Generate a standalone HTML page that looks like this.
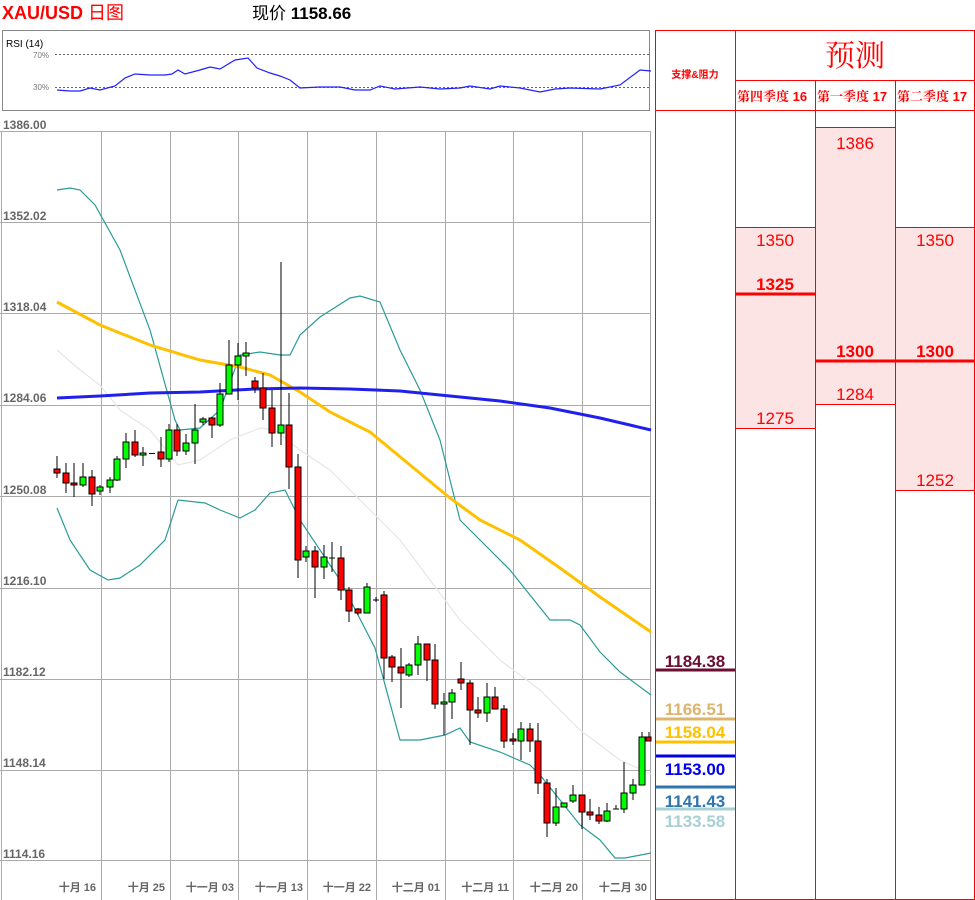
<!DOCTYPE html>
<html><head><meta charset="utf-8"><style>
*{margin:0;padding:0}
body{width:975px;height:900px;background:#fff;position:relative;overflow:hidden;font-family:"Liberation Sans","Noto Sans CJK SC",sans-serif}
.a{position:absolute}
</style></head><body>
<div class="a" style="left:2px;top:2px;font-size:18px;font-weight:bold;color:#f00;line-height:22px">XAU/USD <span style="font-weight:normal">日图</span></div>
<div class="a" style="left:252px;top:3px;font-size:17px;color:#000;line-height:22px">现价 <b>1158.66</b></div>

<svg class="a" style="left:0;top:0" width="655" height="900" xmlns="http://www.w3.org/2000/svg">
<rect x="2.5" y="30.5" width="647" height="80" fill="#fff" stroke="#888"/>
<text x="6" y="47" font-size="10" font-family="Liberation Sans" fill="#000">RSI (14)</text>
<text x="33" y="58" font-size="8" fill="#777" font-family="Liberation Sans">70%</text>
<text x="33" y="90" font-size="8" fill="#777" font-family="Liberation Sans">30%</text>
<line x1="55" y1="54.5" x2="650" y2="54.5" stroke="#666" stroke-dasharray="2,2"/>
<line x1="55" y1="87.5" x2="650" y2="87.5" stroke="#666" stroke-dasharray="2,2"/>
<polyline fill="none" stroke="#2020ff" stroke-width="1.2" points="57,90 70,91 80,91 90,88 100,90 115,86 125,78 135,74 150,75 165,75 172,74 178,70 185,74 200,70 210,67 220,69 235,60 248,58 257,68 270,73 280,76 290,80 300,88 320,87 340,87 355,90 370,90 380,86 395,89 420,87 440,89 460,88 470,86 490,89 500,86 520,88 540,92 555,89 570,88 600,89 620,85 640,70 651,71"/>
<!-- grid -->
<g stroke="#aaa" stroke-width="1">
<line x1="0" y1="131.5" x2="651" y2="131.5"/>
<line x1="0" y1="222.5" x2="651" y2="222.5"/>
<line x1="0" y1="313.5" x2="651" y2="313.5"/>
<line x1="0" y1="405.5" x2="651" y2="405.5"/>
<line x1="0" y1="496.5" x2="651" y2="496.5"/>
<line x1="0" y1="588.5" x2="651" y2="588.5"/>
<line x1="0" y1="679.5" x2="651" y2="679.5"/>
<line x1="0" y1="770.5" x2="651" y2="770.5"/>
<line x1="0" y1="860.5" x2="651" y2="860.5"/>
<line x1="1.5" y1="131" x2="1.5" y2="900"/>
<line x1="101.5" y1="131" x2="101.5" y2="900"/>
<line x1="170.5" y1="131" x2="170.5" y2="900"/>
<line x1="238.5" y1="131" x2="238.5" y2="900"/>
<line x1="307.5" y1="131" x2="307.5" y2="900"/>
<line x1="376.5" y1="131" x2="376.5" y2="900"/>
<line x1="445.5" y1="131" x2="445.5" y2="900"/>
<line x1="513.5" y1="131" x2="513.5" y2="900"/>
<line x1="582.5" y1="131" x2="582.5" y2="900"/>
<line x1="650.5" y1="131" x2="650.5" y2="900"/>
</g>
<g font-family="Liberation Sans" font-size="12" fill="#666" font-weight="bold">
<text x="3" y="129">1386.00</text>
<text x="3" y="220">1352.02</text>
<text x="3" y="311">1318.04</text>
<text x="3" y="402">1284.06</text>
<text x="3" y="494">1250.08</text>
<text x="3" y="585">1216.10</text>
<text x="3" y="676">1182.12</text>
<text x="3" y="767">1148.14</text>
<text x="3" y="858">1114.16</text>
</g>
<g font-family="Liberation Sans,Noto Sans CJK SC" font-size="11" fill="#666" font-weight="bold" text-anchor="end">
<text x="96" y="891">十月 16</text>
<text x="165" y="891">十月 25</text>
<text x="234" y="891">十一月 03</text>
<text x="303" y="891">十一月 13</text>
<text x="371" y="891">十一月 22</text>
<text x="440" y="891">十二月 01</text>
<text x="509" y="891">十二月 11</text>
<text x="578" y="891">十二月 20</text>
<text x="647" y="891">十二月 30</text>
</g>
<!-- indicators -->
<polyline fill="none" stroke="#e6e6e6" stroke-width="1.2" points="57,350 80,370 100,385 120,410 150,430 178,465 200,460 230,440 260,428 275,430 300,450 330,470 360,500 400,540 430,580 460,620 500,660 540,690 580,730 620,760 651,774"/>
<polyline fill="none" stroke="#2a9a98" stroke-width="1.2" points="57,190 70,188 80,190 95,205 120,250 150,330 175,420 180,430 200,428 220,410 240,355 260,352 280,355 290,355 300,335 320,317 350,298 360,296 380,302 400,350 420,390 440,440 460,520 480,540 510,570 550,620 570,620 580,625 600,652 620,672 651,695"/>
<polyline fill="none" stroke="#2a9a98" stroke-width="1.2" points="57,508 70,540 90,570 108,580 120,578 140,565 165,540 178,500 205,503 220,510 240,518 255,510 270,493 285,490 300,520 340,580 375,648 400,740 420,740 445,735 460,728 470,742 500,752 530,765 540,775 560,800 580,825 600,840 615,858 625,858 651,853"/>
<polyline fill="none" stroke="#ffc000" stroke-width="3" points="57,302 100,325 150,345 200,360 240,367 270,375 300,392 330,412 370,432 410,465 450,498 480,520 520,540 560,568 600,597 651,632"/>
<polyline fill="none" stroke="#2020ee" stroke-width="3" points="57,398 100,396 150,393 200,392 255,389 300,388 350,389 400,391 450,396 500,401 550,408 600,418 651,430"/>
<!-- candles -->
<g stroke="#000" stroke-width="1">
<line x1="57" y1="456" x2="57" y2="478"/><rect x="54" y="469" width="6" height="4" fill="#f00"/>
<line x1="66" y1="463" x2="66" y2="493"/><rect x="63" y="473" width="6" height="10" fill="#f00"/>
<line x1="74" y1="463" x2="74" y2="497"/><rect x="71" y="483" width="6" height="2" fill="#f00"/>
<line x1="83" y1="463" x2="83" y2="487"/><rect x="80" y="477" width="6" height="8" fill="#0f0"/>
<line x1="92" y1="470" x2="92" y2="506"/><rect x="89" y="477" width="6" height="17" fill="#f00"/>
<line x1="100" y1="485" x2="100" y2="495"/><rect x="97" y="487" width="6" height="4" fill="#0f0"/>
<line x1="110" y1="477" x2="110" y2="493"/><rect x="107" y="480" width="6" height="7" fill="#0f0"/>
<line x1="117" y1="456" x2="117" y2="481"/><rect x="114" y="459" width="6" height="21" fill="#0f0"/>
<line x1="126" y1="433" x2="126" y2="468"/><rect x="123" y="442" width="6" height="17" fill="#0f0"/>
<line x1="135" y1="430" x2="135" y2="457"/><rect x="132" y="442" width="6" height="13" fill="#f00"/>
<line x1="143" y1="447" x2="143" y2="466"/><rect x="140" y="453" width="6" height="2" fill="#0f0"/>
<line x1="149" y1="453.5" x2="155" y2="453.5"/>
<line x1="161" y1="437" x2="161" y2="467"/><rect x="158" y="452" width="6" height="7" fill="#f00"/>
<line x1="169" y1="424" x2="169" y2="462"/><rect x="166" y="430" width="6" height="29" fill="#0f0"/>
<line x1="177" y1="424" x2="177" y2="456"/><rect x="174" y="430" width="6" height="21" fill="#f00"/>
<line x1="186" y1="434" x2="186" y2="455"/><rect x="183" y="443" width="6" height="8" fill="#0f0"/>
<line x1="195" y1="404" x2="195" y2="464"/><rect x="192" y="430" width="6" height="13" fill="#0f0"/>
<line x1="203" y1="417" x2="203" y2="425"/><rect x="200" y="419" width="6" height="3" fill="#0f0"/>
<line x1="212" y1="417" x2="212" y2="438"/><rect x="209" y="418" width="6" height="7" fill="#f00"/>
<line x1="220" y1="383" x2="220" y2="427"/><rect x="217" y="394" width="6" height="31" fill="#0f0"/>
<line x1="229" y1="340" x2="229" y2="394"/><rect x="226" y="365" width="6" height="29" fill="#0f0"/>
<line x1="238" y1="343" x2="238" y2="400"/><rect x="235" y="356" width="6" height="9" fill="#0f0"/>
<line x1="246" y1="342" x2="246" y2="376"/><rect x="243" y="353" width="6" height="3" fill="#0f0"/>
<line x1="255" y1="377" x2="255" y2="393"/><rect x="252" y="381" width="6" height="7" fill="#f00"/>
<line x1="263" y1="373" x2="263" y2="420"/><rect x="260" y="388" width="6" height="20" fill="#f00"/>
<line x1="272" y1="390" x2="272" y2="447"/><rect x="269" y="408" width="6" height="25" fill="#f00"/>
<line x1="281" y1="262" x2="281" y2="445"/><rect x="278" y="425" width="6" height="8" fill="#0f0"/>
<line x1="289" y1="393" x2="289" y2="489"/><rect x="286" y="425" width="6" height="42" fill="#f00"/>
<line x1="298" y1="454" x2="298" y2="578"/><rect x="295" y="467" width="6" height="93" fill="#f00"/>
<line x1="306" y1="546" x2="306" y2="562"/><rect x="303" y="551" width="6" height="6" fill="#0f0"/>
<line x1="315" y1="546" x2="315" y2="598"/><rect x="312" y="551" width="6" height="16" fill="#f00"/>
<line x1="324" y1="545" x2="324" y2="579"/><rect x="321" y="557" width="6" height="10" fill="#0f0"/>
<line x1="332" y1="542" x2="332" y2="572"/><line x1="329" y1="558" x2="335" y2="558"/>
<line x1="341" y1="546" x2="341" y2="600"/><rect x="338" y="558" width="6" height="32" fill="#f00"/>
<line x1="349" y1="587" x2="349" y2="622"/><rect x="346" y="590" width="6" height="21" fill="#f00"/>
<line x1="358" y1="608" x2="358" y2="615"/><rect x="355" y="609" width="6" height="4" fill="#f00"/>
<line x1="367" y1="583" x2="367" y2="613"/><rect x="364" y="587" width="6" height="26" fill="#0f0"/>
<line x1="376" y1="597" x2="376" y2="602"/><line x1="373" y1="600" x2="379" y2="600"/>
<line x1="384" y1="591" x2="384" y2="679"/><rect x="381" y="595" width="6" height="63" fill="#f00"/>
<line x1="392" y1="655" x2="392" y2="682"/><rect x="389" y="657" width="6" height="10" fill="#f00"/>
<line x1="401" y1="648" x2="401" y2="708"/><rect x="398" y="667" width="6" height="6" fill="#f00"/>
<line x1="409" y1="663" x2="409" y2="677"/><rect x="406" y="665" width="6" height="10" fill="#0f0"/>
<line x1="418" y1="636" x2="418" y2="675"/><rect x="415" y="644" width="6" height="21" fill="#0f0"/>
<line x1="427" y1="644" x2="427" y2="681"/><rect x="424" y="644" width="6" height="16" fill="#f00"/>
<line x1="435" y1="644" x2="435" y2="709"/><rect x="432" y="660" width="6" height="44" fill="#f00"/>
<line x1="444" y1="693" x2="444" y2="735"/><rect x="441" y="702" width="6" height="2" fill="#0f0"/>
<line x1="452" y1="689" x2="452" y2="719"/><rect x="449" y="693" width="6" height="9" fill="#0f0"/>
<line x1="461" y1="662" x2="461" y2="690"/><rect x="458" y="679" width="6" height="4" fill="#f00"/>
<line x1="470" y1="680" x2="470" y2="745"/><rect x="467" y="683" width="6" height="27" fill="#f00"/>
<line x1="478" y1="697" x2="478" y2="718"/><rect x="475" y="710" width="6" height="3" fill="#f00"/>
<line x1="487" y1="683" x2="487" y2="722"/><rect x="484" y="697" width="6" height="16" fill="#0f0"/>
<line x1="495" y1="687" x2="495" y2="709"/><rect x="492" y="697" width="6" height="12" fill="#f00"/>
<line x1="504" y1="705" x2="504" y2="748"/><rect x="501" y="709" width="6" height="32" fill="#f00"/>
<line x1="513" y1="733" x2="513" y2="745"/><rect x="510" y="739" width="6" height="2" fill="#f00"/>
<line x1="521" y1="722" x2="521" y2="760"/><rect x="518" y="729" width="6" height="12" fill="#0f0"/>
<line x1="530" y1="723" x2="530" y2="752"/><rect x="527" y="729" width="6" height="12" fill="#f00"/>
<line x1="538" y1="723" x2="538" y2="794"/><rect x="535" y="741" width="6" height="42" fill="#f00"/>
<line x1="547" y1="779" x2="547" y2="837"/><rect x="544" y="783" width="6" height="40" fill="#f00"/>
<line x1="556" y1="788" x2="556" y2="826"/><rect x="553" y="807" width="6" height="16" fill="#0f0"/>
<line x1="564" y1="803" x2="564" y2="807"/><rect x="561" y="803" width="6" height="4" fill="#0f0"/>
<line x1="573" y1="785" x2="573" y2="803"/><rect x="570" y="795" width="6" height="6" fill="#0f0"/>
<line x1="582" y1="795" x2="582" y2="829"/><rect x="579" y="795" width="6" height="17" fill="#f00"/>
<line x1="590" y1="799" x2="590" y2="820"/><rect x="587" y="812" width="6" height="3" fill="#f00"/>
<line x1="599" y1="807" x2="599" y2="824"/><rect x="596" y="815" width="6" height="6" fill="#f00"/>
<line x1="607" y1="803" x2="607" y2="822"/><rect x="604" y="811" width="6" height="10" fill="#0f0"/>
<line x1="616" y1="805" x2="616" y2="809"/><line x1="613" y1="809" x2="619" y2="809"/>
<line x1="624" y1="762" x2="624" y2="813"/><rect x="621" y="793" width="6" height="16" fill="#0f0"/>
<line x1="633" y1="779" x2="633" y2="800"/><rect x="630" y="785" width="6" height="8" fill="#0f0"/>
<line x1="642" y1="732" x2="642" y2="785"/><rect x="639" y="737" width="6" height="48" fill="#0f0"/>
<line x1="649" y1="732" x2="649" y2="741"/><rect x="646" y="737" width="5" height="4" fill="#f00"/>
</g>
</svg>

<svg class="a" style="left:650px;top:0" width="325" height="900" xmlns="http://www.w3.org/2000/svg">
<!-- pink cells -->
<g fill="#fde4e4" stroke="#f00" stroke-width="1">
<rect x="85.5" y="227.5" width="80" height="201"/>
<rect x="165.5" y="127.5" width="80" height="277"/>
<rect x="245.5" y="227.5" width="80" height="263"/>
</g>
<g stroke="#f00" fill="none">
<rect x="5.5" y="30.5" width="319" height="869"/>
<line x1="85.5" y1="30" x2="85.5" y2="900"/>
<line x1="165.5" y1="80" x2="165.5" y2="900"/>
<line x1="245.5" y1="80" x2="245.5" y2="900"/>
<line x1="324.5" y1="30" x2="324.5" y2="900"/>
<line x1="85" y1="80.5" x2="325" y2="80.5"/>
<line x1="5" y1="110.5" x2="325" y2="110.5"/>
</g>
<g stroke="#f00" stroke-width="3">
<line x1="85" y1="294" x2="166" y2="294"/>
<line x1="165" y1="361" x2="325" y2="361"/>
</g>
<text x="205" y="66" text-anchor="middle" font-size="30" fill="#f00" font-family="Noto Serif CJK SC,serif">预测</text>
<text x="45" y="78" text-anchor="middle" font-size="10" font-weight="bold" fill="#f00" font-family="Liberation Sans,Noto Sans CJK SC,sans-serif">支撑&amp;阻力</text>
<g font-size="13" font-weight="bold" fill="#f00" font-family="Liberation Sans,Noto Serif CJK SC,sans-serif">
<text x="87" y="101">第四季度 16</text>
<text x="167" y="101">第一季度 17</text>
<text x="247" y="101">第二季度 17</text>
</g>
<g font-size="17" fill="#f00" font-family="Liberation Sans,sans-serif" text-anchor="middle">
<text x="125" y="246">1350</text>
<text x="125" y="290" font-weight="bold">1325</text>
<text x="125" y="424">1275</text>
<text x="205" y="149">1386</text>
<text x="205" y="357" font-weight="bold">1300</text>
<text x="205" y="400">1284</text>
<text x="285" y="246">1350</text>
<text x="285" y="357" font-weight="bold">1300</text>
<text x="285" y="486">1252</text>
</g>
<g font-size="17" font-weight="bold" font-family="Liberation Sans,sans-serif" text-anchor="middle">
<text x="45" y="667" fill="#6a0f30">1184.38</text>
<text x="45" y="715" fill="#dcb46c">1166.51</text>
<text x="45" y="738" fill="#ffc000">1158.04</text>
<text x="45" y="775" fill="#0000ee">1153.00</text>
<text x="45" y="807" fill="#2e75b0">1141.43</text>
<text x="45" y="827" fill="#a8d0d2">1133.58</text>
</g>
<g stroke-width="3">
<line x1="6" y1="670" x2="85" y2="670" stroke="#6a0f30"/>
<line x1="6" y1="719" x2="85" y2="719" stroke="#dcb46c"/>
<line x1="6" y1="742" x2="85" y2="742" stroke="#ffc000"/>
<line x1="6" y1="756" x2="85" y2="756" stroke="#0000ee"/>
<line x1="6" y1="787" x2="85" y2="787" stroke="#2e75b0"/>
<line x1="6" y1="809" x2="85" y2="809" stroke="#a8d0d2"/>
</g>
</svg>
</body></html>
